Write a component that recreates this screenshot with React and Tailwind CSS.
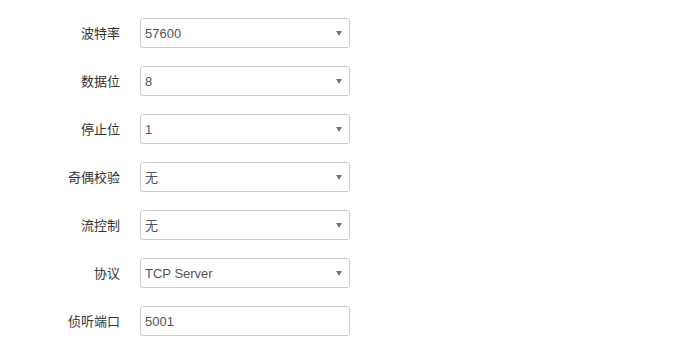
export default function App() {
  const rows = [
    { label: "波特率", value: "57600", select: true },
    { label: "数据位", value: "8", select: true },
    { label: "停止位", value: "1", select: true },
    { label: "奇偶校验", value: "无", select: true },
    { label: "流控制", value: "无", select: true },
    { label: "协议", value: "TCP Server", select: true },
    { label: "侦听端口", value: "5001", select: false },
  ];
  return (
    <div
      className="w-[691px] h-[359px] bg-white pt-[18px] flex flex-col gap-[18px]"
      style={{ fontFamily: '"Liberation Sans", Arial, "Noto Sans CJK SC", sans-serif' }}
    >
      {rows.map((r) => (
        <div key={r.label} className="flex items-center h-[30px]">
          <div className="w-[120px] text-right text-[13px] text-[#333] leading-none">{r.label}</div>
          <div className="ml-[20px] w-[210px] h-[30px] border border-[#ccc] rounded-[3px] flex items-center pl-[4px] pr-[7px]">
            <span className="flex-1 text-[13px] text-[#555] leading-none">{r.value}</span>
            {r.select && (
              <svg width="6" height="5" viewBox="0 0 6 5" className="block">
                <path d="M0 0H6L3 5Z" fill="#777" />
              </svg>
            )}
          </div>
        </div>
      ))}
    </div>
  );
}
